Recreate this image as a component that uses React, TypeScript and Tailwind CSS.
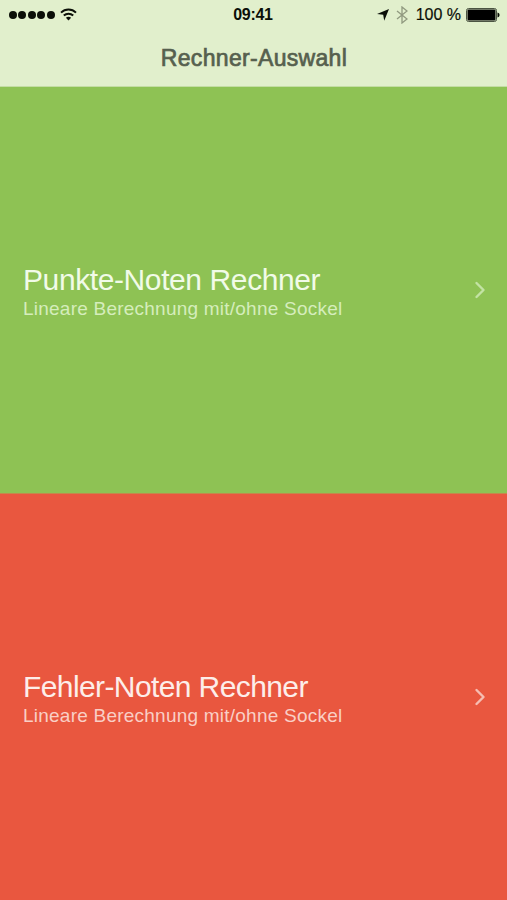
import { ChevronRight } from "lucide-react";

const calculators = [
  {
    title: "Punkte-Noten Rechner",
    subtitle: "Lineare Berechnung mit/ohne Sockel",
    background: "border-b border-[#c18a4c] bg-[#8ec254]",
    titleStyle: "tracking-[-0.4px] text-[#f1fbe8]",
    subtitleColor: "text-[#d5edbc]",
    chevronColor: "text-[#c3e3a4]",
  },
  {
    title: "Fehler-Noten Rechner",
    subtitle: "Lineare Berechnung mit/ohne Sockel",
    background: "bg-[#e9573f]",
    titleStyle: "tracking-[-0.6px] text-[#fdeeea]",
    subtitleColor: "text-[#f9cfc6]",
    chevronColor: "text-[#f6bdb2]",
  },
];

function WifiIcon() {
  return (
    <svg width="17" height="13" viewBox="0 0 17 13" fill="none" stroke="#0b0f08" strokeWidth="2">
      <path d="M1 4.6C5.2 0.5 11.8 0.5 16 4.6" />
      <path d="M3.8 7.5c2.7-2.5 6.7-2.5 9.4 0" />
      <path d="M8.5 12.4 5.9 9.7c1.5-1.3 3.7-1.3 5.2 0z" fill="#0b0f08" stroke="none" />
    </svg>
  );
}

function StatusBar() {
  return (
    <div className="grid h-[29px] grid-cols-3 items-center pl-[9px] pr-[7px] text-[#0b0f08]">
      <div className="flex items-center">
        <div className="flex gap-[1.4px]">
          {[0, 1, 2, 3, 4].map((dot) => (
            <span key={dot} className="size-2 rounded-full bg-[#0b0f08]" />
          ))}
        </div>
        <div className="ml-[5px]">
          <WifiIcon />
        </div>
      </div>
      <div className="pr-[3px] text-center text-base leading-none font-bold tracking-[-0.3px]">09:41</div>
      <div className="flex items-center justify-end">
        <svg width="12" height="12" viewBox="0 0 12 12" fill="#0b0f08">
          <path d="M12 0 7.2 11.8 6.2 5.8 0 4.9z" />
        </svg>
        <svg className="ml-[7px]" width="12" height="18" viewBox="0 0 12 18" fill="none" stroke="#90997f" strokeWidth="1.3">
          <path d="m1 5 10 8-5 4V1l5 4-10 8" />
        </svg>
        <span className="ml-[8px] text-base leading-none whitespace-nowrap [-webkit-text-stroke:0.2px_#0b0f08]">
          100 %
        </span>
        <svg className="ml-[5px]" width="34" height="14" viewBox="0 0 34 14">
          <rect x="0.5" y="0.5" width="30" height="13" rx="2" fill="none" stroke="#4b5443" />
          <rect x="1.5" y="1.5" width="28" height="11" rx="1" fill="#000" />
          <path d="M31.5 4.5c1.6.4 2 1.3 2 2.5s-.4 2.1-2 2.5z" fill="#0b0f08" />
        </svg>
      </div>
    </div>
  );
}

export default function App() {
  return (
    <div className="flex h-[900px] w-[507px] flex-col overflow-hidden font-['Liberation_Sans',Arial,sans-serif]">
      <header className="h-[87px] border-b border-[#c4dda4] bg-[#e1efcc]">
        <StatusBar />
        <h1 className="pt-px pl-px text-center text-[23px] leading-[57px] tracking-[0.32px] text-[#56604e] [-webkit-text-stroke:0.7px_#56604e]">
          Rechner-Auswahl
        </h1>
      </header>

      <main className="flex flex-1 flex-col">
        {calculators.map((calculator) => (
          <button
            key={calculator.title}
            className={`flex flex-1 items-center justify-between pr-[13px] pl-[23px] text-left ${calculator.background}`}
          >
            <span className="pt-[3px]">
              <span className={`block text-[30px] leading-[34px] ${calculator.titleStyle}`}>
                {calculator.title}
              </span>
              <span className={`block text-[19px] leading-[24px] tracking-[0.23px] ${calculator.subtitleColor}`}>
                {calculator.subtitle}
              </span>
            </span>
            <ChevronRight size={28} strokeWidth={2.1} className={calculator.chevronColor} />
          </button>
        ))}
      </main>
    </div>
  );
}
